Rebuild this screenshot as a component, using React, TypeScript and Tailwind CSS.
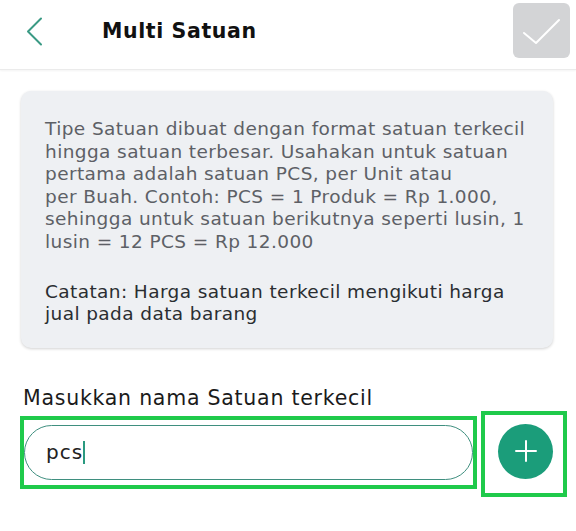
import React from "react";

export default function App() {
  const font = { fontFamily: '"DejaVu Sans", "Open Sans", sans-serif' };
  return (
    <div className="w-[576px] h-[531px] bg-white overflow-hidden" style={font}>
      <header className="h-[70px] flex items-start border-b border-[#ebebeb] shadow-[0_1px_2px_rgba(0,0,0,0.05)]">
        <div className="ml-[26px] mt-[17px] w-[17px] h-[29px]">
          <svg width="17" height="29" viewBox="0 0 17 29" fill="none">
            <path d="M15 1.5 L2 14.5 L15 27.5" stroke="#3a9a84" strokeWidth="2" strokeLinecap="round" strokeLinejoin="round" />
          </svg>
        </div>
        <h1 className="ml-[59px] mt-[17px] text-[20.5px] leading-[28px] font-bold tracking-[0.6px] text-[#111]">Multi Satuan</h1>
        <div className="ml-auto mr-[6px] mt-[3px] w-[57px] h-[55px] rounded-[6px] bg-[#d3d4d6] flex items-center justify-center">
          <svg width="57" height="55" viewBox="0 0 57 55" fill="none">
            <path d="M11 30 L23 40 L46 17" stroke="#fff" strokeWidth="2" strokeLinecap="round" strokeLinejoin="round" />
          </svg>
        </div>
      </header>

      <div className="ml-[21px] mr-[23px] mt-[21px] rounded-[10px] bg-[#eef0f3] shadow-[0_1px_3px_rgba(0,0,0,0.18)] pl-[24px] pr-[6px] pt-[27px] pb-[22px]">
        <div className="text-[18.5px] leading-[22.6px] tracking-[0.4px] text-[#5d6066] whitespace-nowrap">
          <div>Tipe Satuan dibuat dengan format satuan terkecil</div>
          <div>hingga satuan terbesar. Usahakan untuk satuan</div>
          <div>pertama adalah satuan PCS, per Unit atau</div>
          <div>per Buah. Contoh: PCS = 1 Produk = Rp 1.000,</div>
          <div>sehingga untuk satuan berikutnya seperti lusin, 1</div>
          <div>lusin = 12 PCS = Rp 12.000</div>
        </div>
        <div className="mt-[27px] text-[18.5px] leading-[22.6px] tracking-[0.4px] text-[#2a2d31] whitespace-nowrap">
          <div>Catatan: Harga satuan terkecil mengikuti harga</div>
          <div>jual pada data barang</div>
        </div>
      </div>

      <div className="ml-[23px] mt-[38px] text-[20.5px] leading-[24px] tracking-[0.75px] text-[#1b1b1b] whitespace-nowrap">
        Masukkan nama Satuan terkecil
      </div>

      <div className="flex items-start mt-[1px] ml-[20px]">
        <div className="mt-[5px] w-[457px] h-[73px] border-4 border-[#1fca4b] px-0 py-[5px]">
          <div className="h-[55px] w-full rounded-full border-[1.5px] border-[#3f8f7f] flex items-center pl-[21px]">
            <span className="text-[20px] tracking-[1px] text-[#222] leading-none">pcs</span>
            <span className="w-[2px] h-[23px] bg-[#2a9a80]" />
          </div>
        </div>
        <div className="ml-[4px] w-[86px] h-[86px] border-4 border-[#1fca4b] pl-[13px] pt-[9px]">
          <div className="w-[55px] h-[55px] rounded-full bg-[#1b9d7a] flex items-center justify-center">
            <svg width="24" height="24" viewBox="0 0 24 24" fill="none">
              <path d="M12 2 V22 M2 12 H22" stroke="#fff" strokeWidth="2" strokeLinecap="round" />
            </svg>
          </div>
        </div>
      </div>
    </div>
  );
}
